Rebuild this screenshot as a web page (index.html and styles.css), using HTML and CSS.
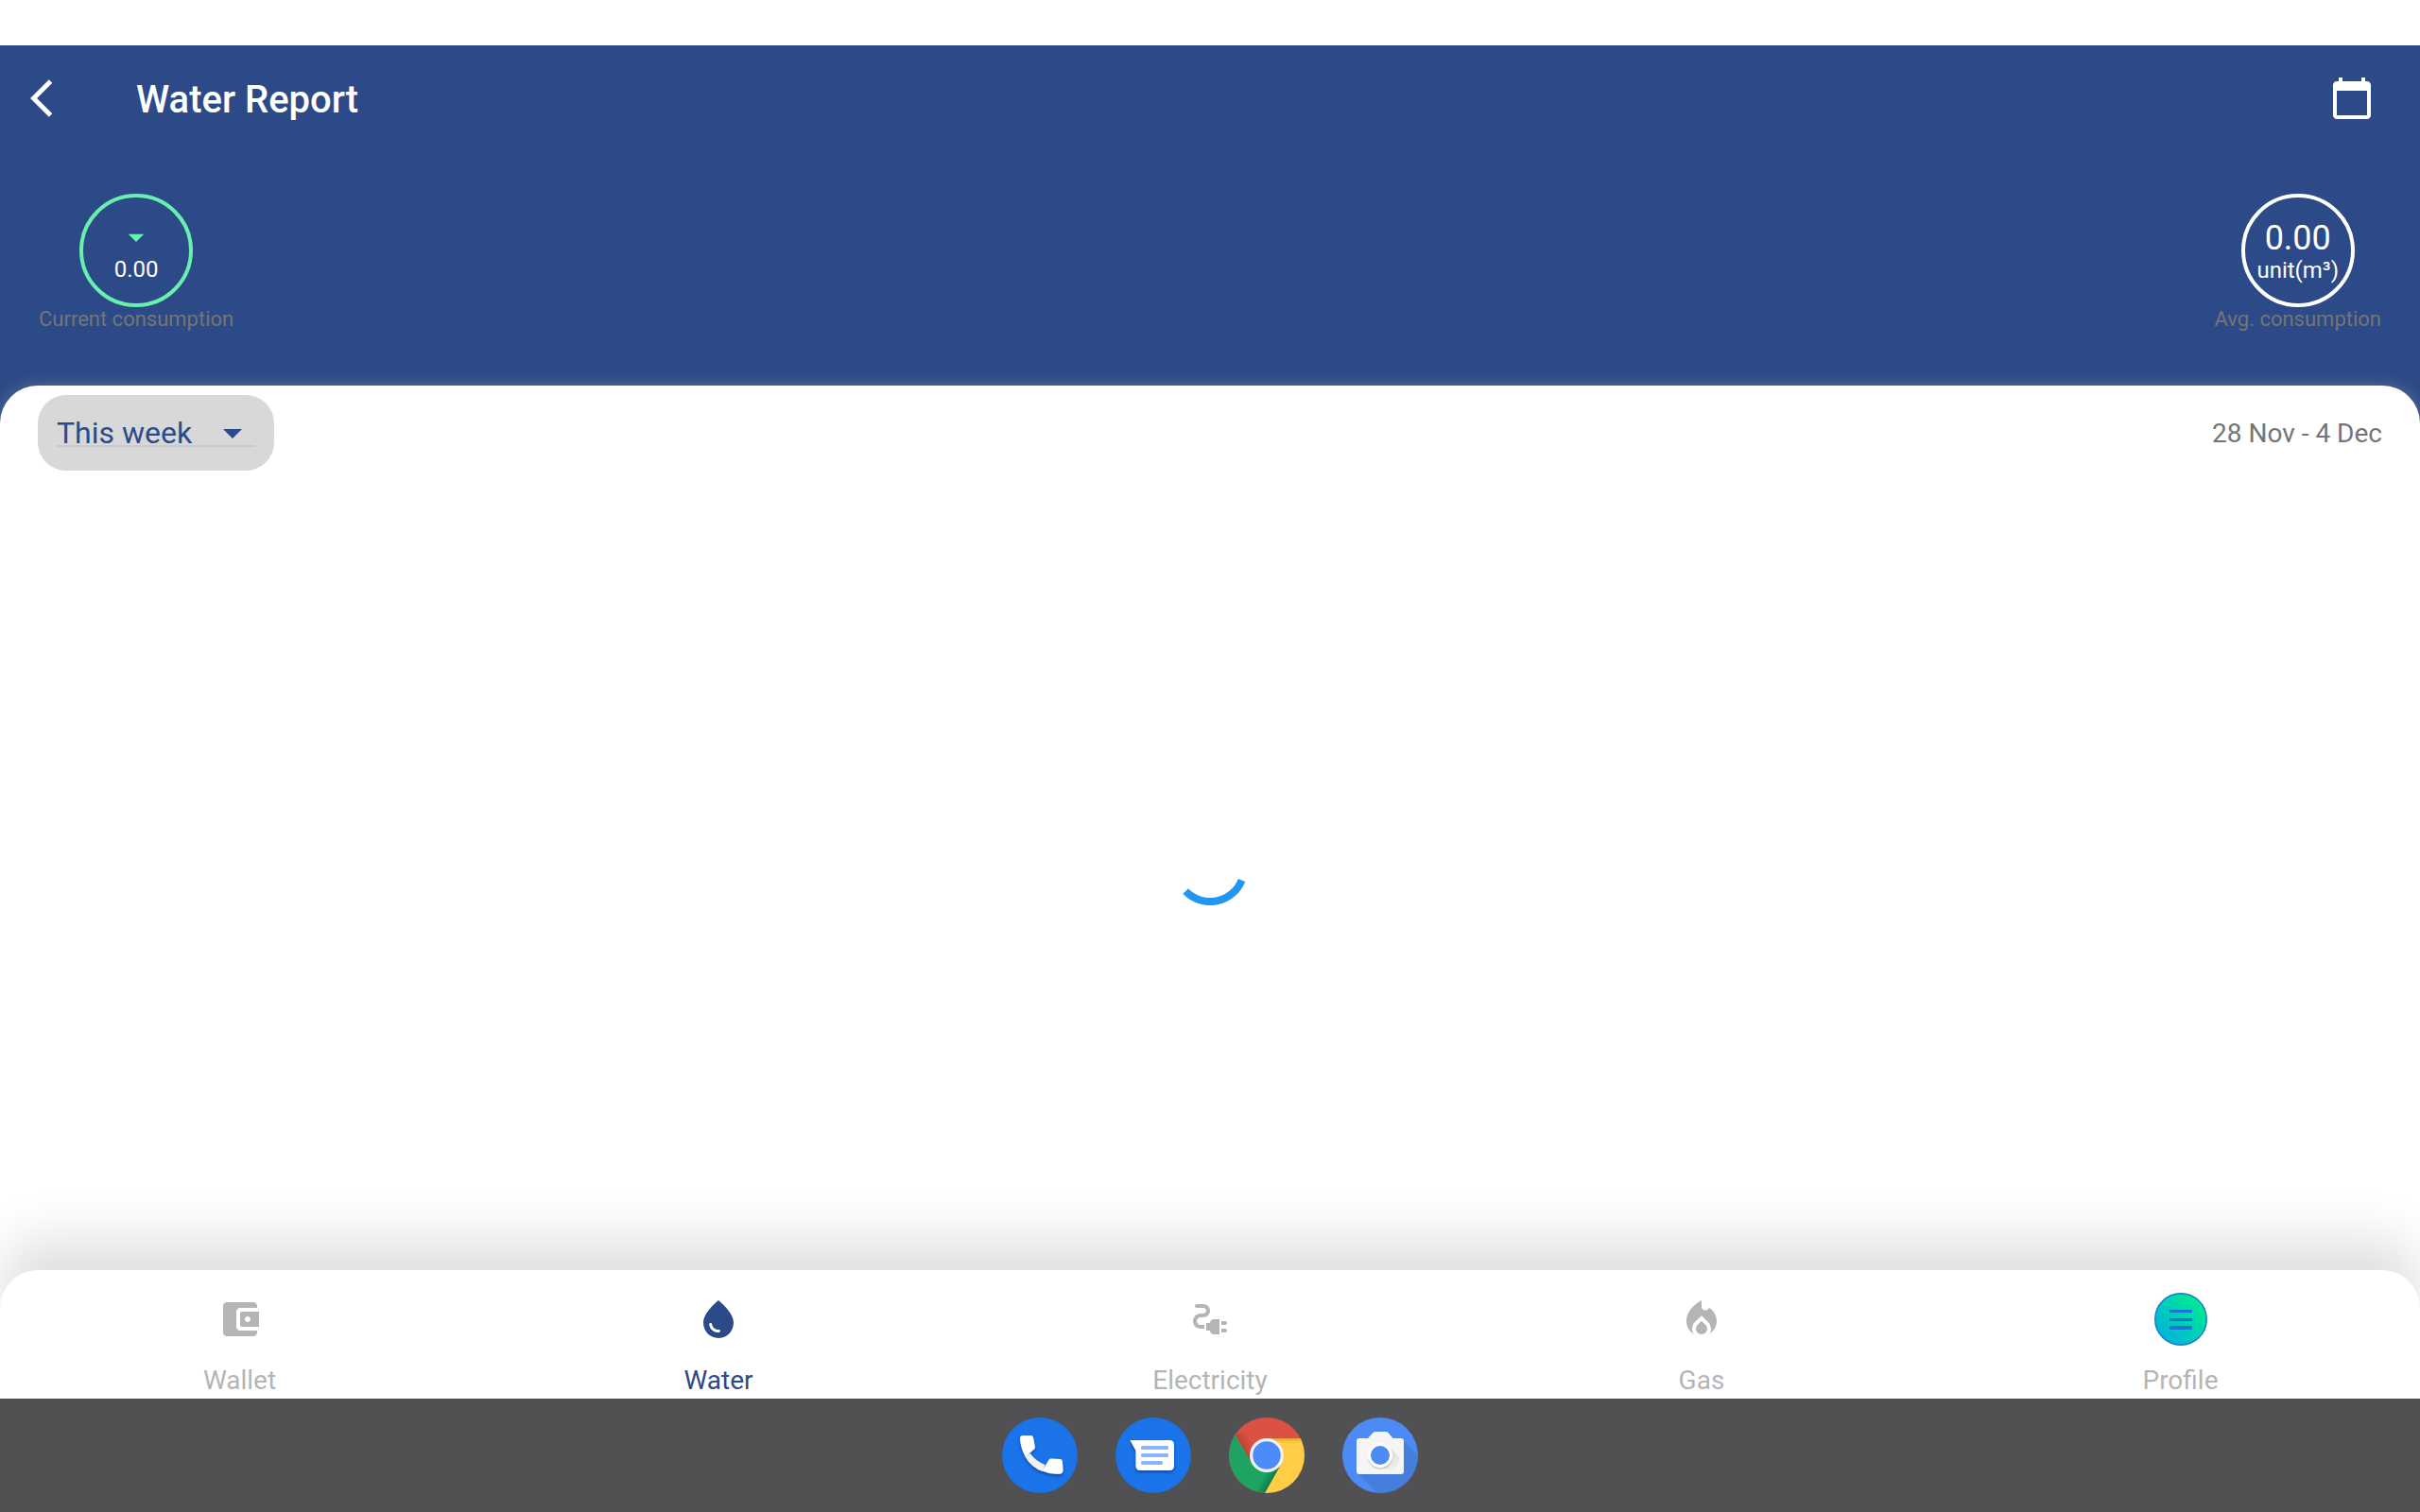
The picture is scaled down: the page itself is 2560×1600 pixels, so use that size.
FILE: index.html
```html
<!DOCTYPE html>
<html lang="en">
<head>
<meta charset="utf-8">
<title>Water Report</title>
<link rel="stylesheet" href="styles.css">
</head>
<body>
<div class="screen">
  <div class="status-bar"></div>
  <header class="header">
    <div class="app-bar">
      <svg class="icon back" viewBox="0 0 24 24"><path d="M11.67 3.87L9.9 2.1 0 12l9.9 9.9 1.77-1.77L3.54 12z"/></svg>
      <h1 class="title">Water Report</h1>
      <svg class="icon" viewBox="0 0 24 24"><path d="M20 3h-1V1h-2v2H7V1H5v2H4c-1.1 0-2 .9-2 2v16c0 1.1.9 2 2 2h16c1.1 0 2-.9 2-2V5c0-1.1-.9-2-2-2zm0 18H4V8h16v13z"/></svg>
    </div>
    <div class="metrics">
      <div class="metric">
        <div class="ring ring-green">
          <svg class="trend" viewBox="0 0 24 24"><path d="M7 10l5 5 5-5z"/></svg>
          <span class="small">0.00</span>
        </div>
        <span class="caption">Current consumption</span>
      </div>
      <div class="metric">
        <div class="ring">
          <span class="large">0.00</span>
          <span class="small">unit(m³)</span>
        </div>
        <span class="caption">Avg. consumption</span>
      </div>
    </div>
  </header>

  <main class="panel">
    <div class="filter">
      <div class="select">
        <div class="select-field">
          <span>This week</span>
          <svg class="caret" viewBox="0 0 24 24"><path d="M7 10l5 5 5-5z"/></svg>
        </div>
      </div>
      <span class="range">28 Nov - 4 Dec</span>
    </div>
    <div class="chart-area">
      <svg class="spinner" viewBox="0 0 80 80"><path d="M14.2 65A36 36 0 0 0 73.6 53.5" fill="none" stroke="#2196f3" stroke-width="8"/></svg>
    </div>
  </main>

  <nav class="nav">
    <div class="nav-item">
      <svg class="icon" viewBox="0 0 24 24"><path d="M10 16V8c0-1.1.89-2 2-2h9V5c0-1.1-.9-2-2-2H5c-1.11 0-2 .9-2 2v14c0 1.1.89 2 2 2h14c1.1 0 2-.9 2-2v-1h-9c-1.11 0-2-.9-2-2zm3-8c-.55 0-1 .45-1 1v6c0 .55.45 1 1 1h9V8h-9zm3 5.5c-.83 0-1.5-.67-1.5-1.5s.67-1.5 1.5-1.5 1.5.67 1.5 1.5-.67 1.5-1.5 1.5z"/></svg>
      <span>Wallet</span>
    </div>
    <div class="nav-item active">
      <svg class="icon" viewBox="0 0 24 24"><path d="M12 2c-5.33 4.55-8 8.48-8 11.8 0 4.98 3.8 8.2 8 8.2s8-3.22 8-8.2c0-3.32-2.67-7.25-8-11.8zM7.83 14c.37 0 .67.26.74.62.41 2.22 2.28 2.98 3.64 2.87.43-.02.79.32.79.75 0 .4-.32.73-.72.75-2.13.13-4.62-1.09-5.19-4.12-.08-.45.28-.87.74-.87z"/></svg>
      <span>Water</span>
    </div>
    <div class="nav-item">
      <svg class="icon" viewBox="0 0 24 24"><path d="M21 14c0-.55-.45-1-1-1h-2v2h2c.55 0 1-.45 1-1zM20 17h-2v2h2c.55 0 1-.45 1-1s-.45-1-1-1zM12 14h-2v4h2c0 1.1.9 2 2 2h3v-8h-3c-1.1 0-2 .9-2 2zM5 13c0-1.1.9-2 2-2h1.5c1.93 0 3.5-1.57 3.5-3.5S10.43 4 8.5 4H5c-.55 0-1 .45-1 1s.45 1 1 1h3.5c.83 0 1.5.67 1.5 1.5S9.33 9 8.5 9H7c-2.21 0-4 1.79-4 4s1.79 4 4 4h2v-2H7c-1.1 0-2-.9-2-2z"/></svg>
      <span>Electricity</span>
    </div>
    <div class="nav-item">
      <svg class="icon" viewBox="0 0 24 24"><path d="M16 6l-.44.55C14.38 8.02 12 7.19 12 5.3V2S4 6 4 13c0 2.92 1.56 5.47 3.89 6.86C7.33 19.07 7 18.1 7 17.05c0-1.32.52-2.56 1.47-3.5L12 10.1l3.53 3.47c.95.93 1.47 2.17 1.47 3.5 0 1.02-.31 1.96-.85 2.75 1.89-1.15 3.29-3.06 3.71-5.3.66-3.55-1.07-6.9-3.86-8.52zM12 12.9l-2.13 2.09c-.56.56-.87 1.29-.87 2.07C9 18.68 10.35 20 12 20s3-1.32 3-2.94c0-.78-.31-1.52-.87-2.07L12 12.9z"/></svg>
      <span>Gas</span>
    </div>
    <div class="nav-item">
      <svg class="avatar" viewBox="0 0 56 56">
        <defs><linearGradient id="avatar-fill" x1="0.1" y1="0.9" x2="0.9" y2="0.1"><stop offset="0" stop-color="#00afe0"/><stop offset="1" stop-color="#00ee8e"/></linearGradient></defs>
        <circle cx="28" cy="28" r="27.3" fill="url(#avatar-fill)" stroke="#1976d2" stroke-width="1.4"/>
        <path fill="#1976d2" d="M16 18h24v3H16zM16 27h24v3H16zM17 35h22l1 1v2l-1 1H17l-1-1v-2z"/>
      </svg>
      <span>Profile</span>
    </div>
  </nav>

  <footer class="dock">
    <svg class="app" viewBox="0 0 80 80">
      <defs><filter id="drop" x="-30%" y="-30%" width="160%" height="170%"><feDropShadow dx="0" dy="2" stdDeviation="1.5" flood-color="#0b3b8c" flood-opacity="0.75"/></filter></defs>
      <circle cx="40" cy="40" r="40" fill="#1a73e8"/>
      <g filter="url(#drop)">
        <path fill="#f1f1f2" d="M24.500 41.500L29.800 38Q35.500 46 45.500 50L43 57Q31 53 24.500 41.500z"/>
        <path fill="#fff" d="M22 19H30.500Q32.500 19 33 21L35 31Q35.200 32.200 34.300 33.200L24.700 41.700Q19.500 32 19 22.200Q19 19 22 19z"/>
        <path fill="#fff" d="M42.500 56.500L49.500 44.800Q50.300 43.200 52 43.400L61.500 44Q63.800 44.300 64 46.500L64.500 56Q64.300 59.500 60.500 59.700Q51 60.500 42.500 56.500z"/>
      </g>
    </svg>
    <svg class="app" viewBox="0 0 80 80">
      <circle cx="40" cy="40" r="40" fill="#1a73e8"/>
      <path filter="url(#drop)" fill="#fff" d="M15.500 24H57Q62 24 62 29V51Q62 56 57 56H26.500Q21.500 56 21.500 51V35z"/>
      <g fill="#8ab4f8"><rect x="27" y="30" width="29" height="4" rx="1.500"/><rect x="27" y="38" width="29" height="4" rx="1.500"/><rect x="27" y="46" width="23" height="4" rx="1.500"/></g>
    </svg>
    <svg class="app" viewBox="0 0 80 80">
      <defs>
        <clipPath id="disc"><circle cx="40" cy="40" r="40"/></clipPath>
        <linearGradient id="red-shade" gradientUnits="userSpaceOnUse" x1="12" y1="32" x2="24" y2="25"><stop offset="0" stop-color="#b93f32"/><stop offset="1" stop-color="#b93f32" stop-opacity="0"/></linearGradient>
        <linearGradient id="yellow-shade" x1="0" y1="0" x2="0" y2="1"><stop offset="0" stop-color="#dda02c"/><stop offset="1" stop-color="#ffcd46" stop-opacity="0"/></linearGradient>
        <linearGradient id="green-shade" gradientUnits="userSpaceOnUse" x1="46" y1="67" x2="37" y2="62"><stop offset="0" stop-color="#0d7a46"/><stop offset="1" stop-color="#0d7a46" stop-opacity="0"/></linearGradient>
      </defs>
      <g clip-path="url(#disc)">
        <rect width="80" height="80" fill="#dd5144"/>
        <path fill="url(#red-shade)" d="M6.500 18L23 47L40 40L24 14z"/>
        <path fill="#1ea362" d="M6.500 18L24.500 49L40 57L54 53L38 80H0V18z"/>
        <path fill="url(#green-shade)" d="M54 53L38 80H28L36 56z"/>
        <path fill="#ffcd46" d="M40 22H80V80H38L55.500 49z"/>
        <path fill="url(#yellow-shade)" d="M40 22H78L79 29L53 27z"/>
      </g>
      <circle cx="40" cy="40" r="18" fill="#f1f1f1"/><circle cx="40" cy="40" r="14.700" fill="#4c8bf5"/>
    </svg>
    <svg class="app" viewBox="0 0 80 80">
      <defs><linearGradient id="lens-shade" gradientUnits="userSpaceOnUse" x1="48" y1="36" x2="62" y2="50"><stop offset="0" stop-color="#d3d3d3"/><stop offset="1" stop-color="#f5f5f5"/></linearGradient></defs>
      <circle cx="40" cy="40" r="40" fill="#4c8bf5"/>
      <path clip-path="url(#disc)" fill="#457edd" d="M16 59L37 80H80V40L64 24V59z"/>
      <path fill="#f5f5f5" d="M18 22H27L32.500 16Q33.500 15 35 15H46Q47.500 15 48.500 16L53.500 22H62Q65 22 65 25V57Q65 60 62 60H18Q15 60 15 57V25Q15 22 18 22z"/>
      <path fill="url(#lens-shade)" d="M49 31L62 44L55 56L42 53z"/>
      <circle cx="40" cy="42" r="13" fill="#000" opacity=".13"/>
      <circle cx="40" cy="40" r="13" fill="#fff"/><circle cx="40" cy="40" r="10" fill="#4c8bf5"/>
    </svg>
  </footer>
</div>
</body>
</html>
```
FILE: styles.css
```css
* { box-sizing: border-box; }

body {
  margin: 0;
  background: #fff;
  font-family: Roboto, "Liberation Sans", sans-serif;
}

.screen {
  display: flex;
  flex-direction: column;
  width: 2560px;
  height: 1600px;
  overflow: hidden;
}

.screen > * { flex: none; }

svg { display: block; flex: none; }

.status-bar { height: 48px; background: #fff; }

.header {
  height: 400px;
  background: #2c4a87;
  color: #fff;
}

.app-bar {
  display: flex;
  align-items: center;
  height: 112px;
  padding: 0 48px 0 32px;
}

.icon { width: 48px; height: 48px; fill: currentColor; }

.title {
  flex: 1;
  margin: 0;
  padding: 3px 0 0 64px;
  font-size: 40px;
  font-weight: 500;
  line-height: 48px;
}

.metrics {
  display: flex;
  justify-content: space-between;
  padding: 45px 41px 0;
}

.metric { display: flex; flex-direction: column; align-items: center; }

.ring {
  display: flex;
  flex-direction: column;
  align-items: center;
  justify-content: center;
  width: 120px;
  height: 120px;
  border: 4px solid #fff;
  border-radius: 50%;
}

.ring-green { border-color: #69f0ae; }

.trend { width: 40px; height: 40px; fill: #69f0ae; }

.small { font-size: 24px; line-height: 28px; white-space: nowrap; }

.large {
  height: 42px;
  padding-top: 1px;
  font-size: 36px;
  line-height: 42px;
}

.caption { color: #757575; font-size: 22px; line-height: 25px; }

/* Runs on behind the rounded corners of the navigation bar. */
.panel {
  display: flex;
  flex-direction: column;
  height: 1072px;
  margin-top: -40px;
  background: #fff;
  border-radius: 40px 40px 0 0;
  box-shadow: 0 0 16px rgba(158, 158, 158, 0.45);
}

.filter {
  display: flex;
  align-items: center;
  justify-content: space-between;
  padding: 10px 40px 0;
}

.select {
  width: 250px;
  height: 80px;
  padding: 15px 20px;
  background: #d8d8d8;
  border-radius: 30px;
}

.select-field {
  display: flex;
  align-items: center;
  justify-content: space-between;
  height: 40px;
  color: #2c4a87;
  border-bottom: 2px solid #cacaca;
  font-size: 32px;
  line-height: 48px;
}

.select-field span { padding-top: 12px; }

.caret { width: 48px; height: 48px; fill: currentColor; margin-top: 12px; }

.range {
  padding-top: 2px;
  color: #757575;
  font-size: 28px;
  line-height: 34px;
}

.chart-area {
  display: flex;
  flex: 1;
  align-items: center;
  justify-content: center;
  padding-bottom: 142px;
}

.spinner { width: 80px; height: 80px; }

.nav {
  position: relative;
  display: grid;
  grid-template-columns: 507px 506px 534px 506px 507px;
  height: 136px;
  margin-top: -136px;
  padding-top: 24px;
  background: #fff;
  border-radius: 40px 40px 0 0;
  box-shadow: 0 -34px 56px -2px rgba(0, 0, 0, 0.13);
  color: #b5b5b5;
  font-size: 28px;
  line-height: 34px;
}

.nav-item {
  display: grid;
  grid-template-rows: 56px 34px;
  row-gap: 20px;
  align-items: center;
  align-content: start;
  justify-items: center;
}

.nav-item.active { color: #2c4a87; }

.avatar { width: 56px; height: 56px; }

.dock {
  position: relative;
  display: flex;
  align-items: center;
  justify-content: center;
  gap: 40px;
  height: 120px;
  background: #515153;
}

.app { width: 80px; height: 80px; }
```
